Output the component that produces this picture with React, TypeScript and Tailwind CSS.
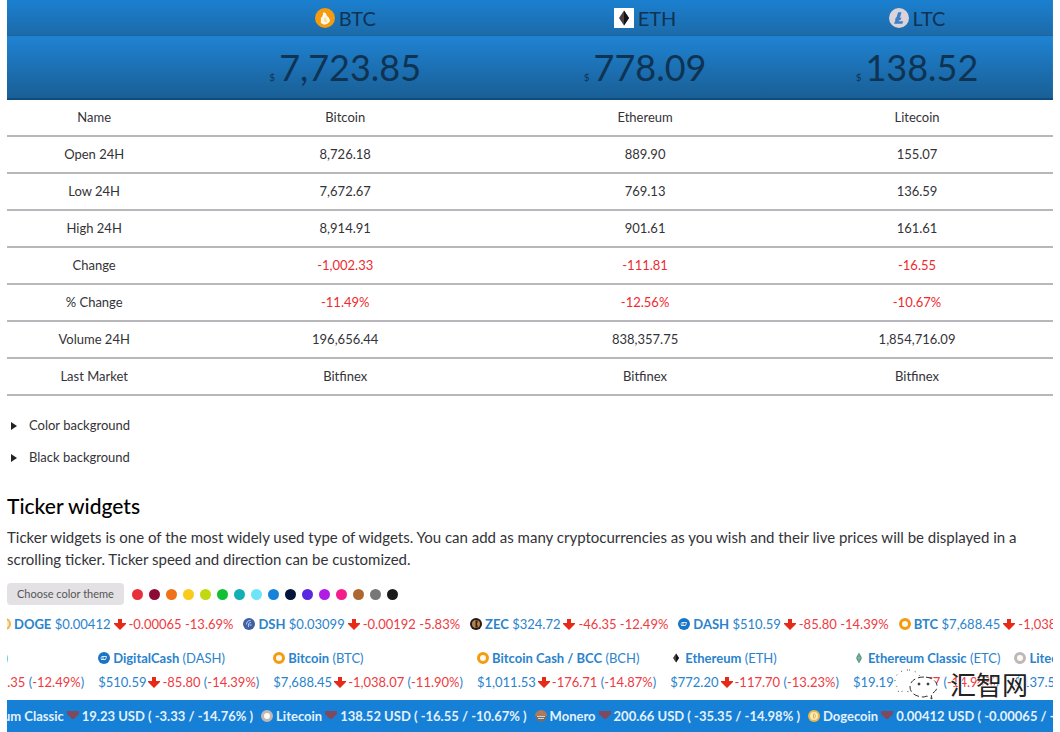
import { useState } from 'react'
import clsx from 'clsx'

type CoinName = 'btc' | 'eth' | 'ltc' | 'dash' | 'dsh' | 'zec' | 'etc' | 'xmr' | 'doge'

const coins = [
  { icon: 'btc', symbol: 'BTC', price: '7,723.85' },
  { icon: 'eth', symbol: 'ETH', price: '778.09' },
  { icon: 'ltc', symbol: 'LTC', price: '138.52' },
] as const

const rows = [
  { label: 'Name', values: ['Bitcoin', 'Ethereum', 'Litecoin'] },
  { label: 'Open 24H', values: ['8,726.18', '889.90', '155.07'] },
  { label: 'Low 24H', values: ['7,672.67', '769.13', '136.59'] },
  { label: 'High 24H', values: ['8,914.91', '901.61', '161.61'] },
  { label: 'Change', values: ['-1,002.33', '-111.81', '-16.55'], down: true },
  { label: '% Change', values: ['-11.49%', '-12.56%', '-10.67%'], down: true },
  { label: 'Volume 24H', values: ['196,656.44', '838,357.75', '1,854,716.09'] },
  { label: 'Last Market', values: ['Bitfinex', 'Bitfinex', 'Bitfinex'] },
]

const themes = [
  { name: 'Red', color: 'bg-[#e8303a]' },
  { name: 'Maroon', color: 'bg-[#8c0a35]' },
  { name: 'Orange', color: 'bg-[#f0711a]' },
  { name: 'Yellow', color: 'bg-[#fbcb1c]' },
  { name: 'Lime', color: 'bg-[#bfd912]' },
  { name: 'Green', color: 'bg-[#12bf35]' },
  { name: 'Teal', color: 'bg-[#12b0b4]' },
  { name: 'Sky', color: 'bg-[#6fe4f8]' },
  { name: 'Blue', color: 'bg-[#1583dc]' },
  { name: 'Navy', color: 'bg-[#05143a]' },
  { name: 'Violet', color: 'bg-[#5a28e0]' },
  { name: 'Purple', color: 'bg-[#b01be6]' },
  { name: 'Pink', color: 'bg-[#f51c8c]' },
  { name: 'Brown', color: 'bg-[#ad6832]' },
  { name: 'Gray', color: 'bg-[#777777]' },
  { name: 'Black', color: 'bg-[#1a1a1c]' },
]

const compactTicker: { icon: CoinName; symbol: string; price: string; change: string }[] = [
  { icon: 'doge', symbol: 'DOGE', price: '$0.00412', change: '-0.00065 -13.69%' },
  { icon: 'dsh', symbol: 'DSH', price: '$0.03099', change: '-0.00192 -5.83%' },
  { icon: 'zec', symbol: 'ZEC', price: '$324.72', change: '-46.35 -12.49%' },
  { icon: 'dash', symbol: 'DASH', price: '$510.59', change: '-85.80 -14.39%' },
  { icon: 'btc', symbol: 'BTC', price: '$7,688.45', change: '-1,038.07 -11.90%' },
]

const stackedTicker: {
  icon: CoinName
  name: string
  symbol: string
  price: string
  change: string
  percent: string
}[] = [
  { icon: 'zec', name: 'ZCash', symbol: 'ZEC', price: '$324.72', change: '-46.35', percent: '-12.49%' },
  { icon: 'dash', name: 'DigitalCash', symbol: 'DASH', price: '$510.59', change: '-85.80', percent: '-14.39%' },
  { icon: 'btc', name: 'Bitcoin', symbol: 'BTC', price: '$7,688.45', change: '-1,038.07', percent: '-11.90%' },
  { icon: 'btc', name: 'Bitcoin Cash / BCC', symbol: 'BCH', price: '$1,011.53', change: '-176.71', percent: '-14.87%' },
  { icon: 'eth', name: 'Ethereum', symbol: 'ETH', price: '$772.20', change: '-117.70', percent: '-13.23%' },
  { icon: 'etc', name: 'Ethereum Classic', symbol: 'ETC', price: '$19.19', change: '-3.77', percent: '-14.94%' },
  { icon: 'ltc', name: 'Litecoin', symbol: 'LTC', price: '$137.50', change: '-17.57', percent: '-11.33%' },
]

const barTicker: { icon: CoinName; name: string; text: string }[] = [
  { icon: 'etc', name: 'Ethereum Classic', text: '19.23 USD ( -3.33 / -14.76% )' },
  { icon: 'ltc', name: 'Litecoin', text: '138.52 USD ( -16.55 / -10.67% )' },
  { icon: 'xmr', name: 'Monero', text: '200.66 USD ( -35.35 / -14.98% )' },
  { icon: 'doge', name: 'Dogecoin', text: '0.00412 USD ( -0.00065 / -13.69% )' },
]

function CoinIcon({ name, className }: { name: CoinName; className: string }) {
  return (
    <svg viewBox="0 0 24 24" className={clsx('shrink-0', className)} aria-hidden="true">
      {name === 'btc' && (
        <>
          <circle cx="12" cy="12" r="12" fill="#f49b0f" />
          <path d="M10 5l3 1 1 3 3 3 1 4-3 3-4 1-4-2V12l2-2z" fill="#fff8e8" />
          <path d="M11 11l3 1-1 1 2 2-1 2h-3z" fill="#fbdc9c" />
        </>
      )}
      {name === 'eth' && (
        <>
          <path d="M12 3l6 9-6 9-6-9z" fill="#4a3f42" />
          <path d="M12 3v18l6-9z" fill="#15121c" />
        </>
      )}
      {name === 'ltc' && (
        <>
          <circle cx="12" cy="12" r="12" fill="#dcd3d9" />
          <path d="M11 5h4l-2 7 2-1-1 3-2 1-1 1h6l-1 3H6l2-5-1 1 1-3 1-1z" fill="#3a7fca" />
        </>
      )}
      {name === 'dash' && (
        <>
          <circle cx="12" cy="12" r="12" fill="#1a75c4" />
          <path d="M7 9h10l-2 6H6M5 12h7" stroke="#d8eafa" strokeWidth="2" fill="none" />
        </>
      )}
      {name === 'dsh' && (
        <>
          <circle cx="12" cy="12" r="12" fill="#3f60a4" />
          <path d="M15 5c-6 0-8 4-8 8M16 9c-5 0-6 4-5 9M17 14h-4" stroke="#c4d2ec" strokeWidth="2" fill="none" />
        </>
      )}
      {name === 'zec' && (
        <>
          <circle cx="12" cy="12" r="12" fill="#231a18" />
          <circle cx="12" cy="12" r="8" fill="#b9814e" />
          <path d="M11 5h5l-2 7 2 7h-5z" fill="#33231b" />
        </>
      )}
      {name === 'etc' && (
        <>
          <path d="M12 1l6 11-6 11-6-11z" fill="#4c9277" />
          <path d="M12 5v14M7 12h10" stroke="#d5e7df" strokeWidth="1" />
        </>
      )}
      {name === 'xmr' && (
        <>
          <path d="M0 12a12 12 0 0124 0z" fill="#ad7b5b" />
          <path d="M0 12h24a12 12 0 01-24 0z" fill="#6b7075" />
          <path d="M4 13h16M6 17h12" stroke="#ddd0c4" strokeWidth="2" fill="none" />
        </>
      )}
      {name === 'doge' && (
        <>
          <circle cx="12" cy="12" r="12" fill="#e8b84a" />
          <circle cx="12" cy="12" r="8" fill="#f9e9b8" />
          <path d="M11 8v8h1c4 0 4-8 0-8z" stroke="#e2b24a" strokeWidth="2" fill="none" />
        </>
      )}
    </svg>
  )
}

function RingIcon({ color }: { color: string }) {
  return (
    <svg viewBox="0 0 24 24" className="size-3 shrink-0" aria-hidden="true">
      <circle cx="12" cy="12" r="9" fill="#fffaf0" stroke={color} strokeWidth="6" />
    </svg>
  )
}

function TickerIcon({ name }: { name: CoinName }) {
  if (name === 'btc') return <RingIcon color="#f49b0f" />
  if (name === 'ltc') return <RingIcon color="#bdb8ba" />
  return <CoinIcon name={name} className="size-3" />
}

function DownArrow() {
  return (
    <svg viewBox="0 0 12 12" className="size-3 shrink-0" aria-hidden="true">
      <path d="M4 1h4v4h4v1l-6 6-6-6V5h4z" fill="#e62a17" />
    </svg>
  )
}

export default function App() {
  const [theme, setTheme] = useState('Blue')

  return (
    <main className="relative overflow-hidden bg-white px-[7px] font-['Lato',sans-serif] text-[#333338]">
      <table className="w-full table-fixed border-separate border-spacing-0 text-center text-[13px]">
        <colgroup>
          <col className="w-1/6" />
          <col />
          <col className="w-[26%]" />
          <col className="w-[26%]" />
        </colgroup>
        <thead className="text-[#0f3353]">
          <tr className="h-9 bg-linear-to-b from-[#1b80d0] to-[#1c6aa8]">
            <td className="border-b border-[#1a65a0]" />
            {coins.map((coin) => (
              <th key={coin.symbol} scope="col" className="border-b border-[#1a65a0] p-0 text-xl leading-7 font-normal">
                <div className="flex items-center justify-center gap-1">
                  <span className={clsx('flex', coin.icon === 'eth' && 'bg-white')}>
                    <CoinIcon name={coin.icon} className="size-5" />
                  </span>
                  {coin.symbol}
                </div>
              </th>
            ))}
          </tr>
          <tr className="h-16 bg-linear-to-b from-[#1f83d3] to-[#195e94]">
            <td className="border-b-2 border-[#0f4c80]" />
            {coins.map((coin) => (
              <td key={coin.symbol} className="border-b-2 border-[#0f4c80] p-0">
                <span className="mr-1 text-[10px]">$</span>
                <span className="text-4xl">{coin.price}</span>
              </td>
            ))}
          </tr>
        </thead>
        <tbody>
          {rows.map((row) => (
            <tr key={row.label} className="h-[37px]">
              <th scope="row" className="border-b-2 border-[#b8b8bc] p-0 font-normal">{row.label}</th>
              {row.values.map((value, i) => (
                <td key={i} className={clsx('border-b-2 border-[#b8b8bc] p-0', row.down && 'text-[#ee2a30]')}>
                  {value}
                </td>
              ))}
            </tr>
          ))}
        </tbody>
      </table>

      {/* Collapsed variants */}
      <div className="mt-[14px] flex flex-col items-start text-[13px]">
        {['Color background', 'Black background'].map((label) => (
          <button key={label} type="button" className="flex h-8 items-center gap-3 pl-1">
            <svg viewBox="0 0 6 8" className="h-2 w-1.5" aria-hidden="true">
              <path d="M0 0l6 4-6 4z" fill="#222226" />
            </svg>
            {label}
          </button>
        ))}
      </div>

      <h2 className="mt-4 text-[21px] leading-8 font-medium text-black">Ticker widgets</h2>
      <p className="mt-1 text-[15px] leading-[22px]">
        Ticker widgets is one of the most widely used type of widgets. You can add as many cryptocurrencies as you wish
        and their live prices will be displayed in a scrolling ticker. Ticker speed and direction can be customized.
      </p>

      {/* Theme picker */}
      <div className="mt-3 flex h-6 items-center">
        <span className="rounded-sm bg-[#e3e1e3] px-[10px] text-[11px] leading-[22px] text-[#555558]">
          Choose color theme
        </span>
        <div className="ml-2 flex gap-[6px]">
          {themes.map((t) => (
            <button
              key={t.name}
              type="button"
              aria-label={t.name}
              aria-pressed={theme === t.name}
              onClick={() => setTheme(t.name)}
              className={clsx('size-[11px] rounded-full', t.color)}
            />
          ))}
        </div>
      </div>

      {/* One line ticker */}
      <div className="mt-2 overflow-hidden text-[13px] leading-5 whitespace-nowrap text-[#2a83cc]">
        <div className="-ml-2 flex gap-[10px]">
          {compactTicker.map((item) => (
            <a key={item.symbol} href="#" className="flex shrink-0 items-center gap-[3px]">
              <TickerIcon name={item.icon} />
              <span><b>{item.symbol}</b> {item.price}</span>
              <DownArrow />
              <span className="text-[#ee3b42]">{item.change}</span>
            </a>
          ))}
        </div>
      </div>

      {/* Two line ticker */}
      <div className="mt-3 overflow-hidden text-[13px] leading-6 whitespace-nowrap text-[#2a83cc]">
        <div className="-ml-[84px] flex gap-[14px]">
          {stackedTicker.map((item) => (
            <a key={item.name} href="#" className="shrink-0">
              <div className="flex items-center gap-[3px]">
                <TickerIcon name={item.icon} />
                <span><b>{item.name}</b> ({item.symbol})</span>
              </div>
              <div className="flex items-center gap-[2px]">
                {item.price}
                <DownArrow />
                <span>
                  <span className="text-[#ee3b42]">{item.change}</span> (
                  <span className="text-[#ee3b42]">{item.percent}</span>)
                </span>
              </div>
            </a>
          ))}
        </div>
      </div>

      {/* Filled ticker */}
      <div className="mt-[6px] overflow-hidden bg-[#1580d6] text-[13px] leading-8 font-bold whitespace-nowrap text-[#e4f1fc]">
        <div className="-ml-[57px] flex gap-2">
          {barTicker.map((item) => (
            <a key={item.name} href="#" className="flex shrink-0 items-center gap-[3px]">
              <TickerIcon name={item.icon} />
              {item.name}
              <svg viewBox="0 0 12 12" className="size-3 shrink-0" aria-hidden="true">
                <path d="M0 1h12v3L7 9H5L0 4z" fill="#7e4a60" />
              </svg>
              {item.text}
            </a>
          ))}
        </div>
      </div>

      {/* Site mark */}
      <div className="absolute right-8 bottom-8 flex items-center gap-3">
        <svg viewBox="0 0 44 32" className="h-8 w-11" fill="#fff" stroke="#333" aria-hidden="true">
          <path d="M14 2C6 2 1 7 1 13c0 4 2 6 4 8l-1 4 5-2c8 2 18-2 18-10C27 7 22 2 14 2z" stroke="#555" strokeDasharray="1 5" />
          <path d="M30 9c-8 0-14 4-14 10s6 10 14 10l3-1 5 3-1-5c4-2 6-4 6-8 0-5-6-9-13-9z" strokeDasharray="6 3" />
          <circle cx="25" cy="16" r="1" fill="#333" />
          <circle cx="34" cy="16" r="1" fill="#333" />
        </svg>
        <span className="font-['Noto_Sans_CJK_SC',sans-serif] text-[26px] leading-8 text-[#222] [text-shadow:-1px_-1px_0_#fff,1px_0_0_#fff]">
          汇智网
        </span>
      </div>
    </main>
  )
}
